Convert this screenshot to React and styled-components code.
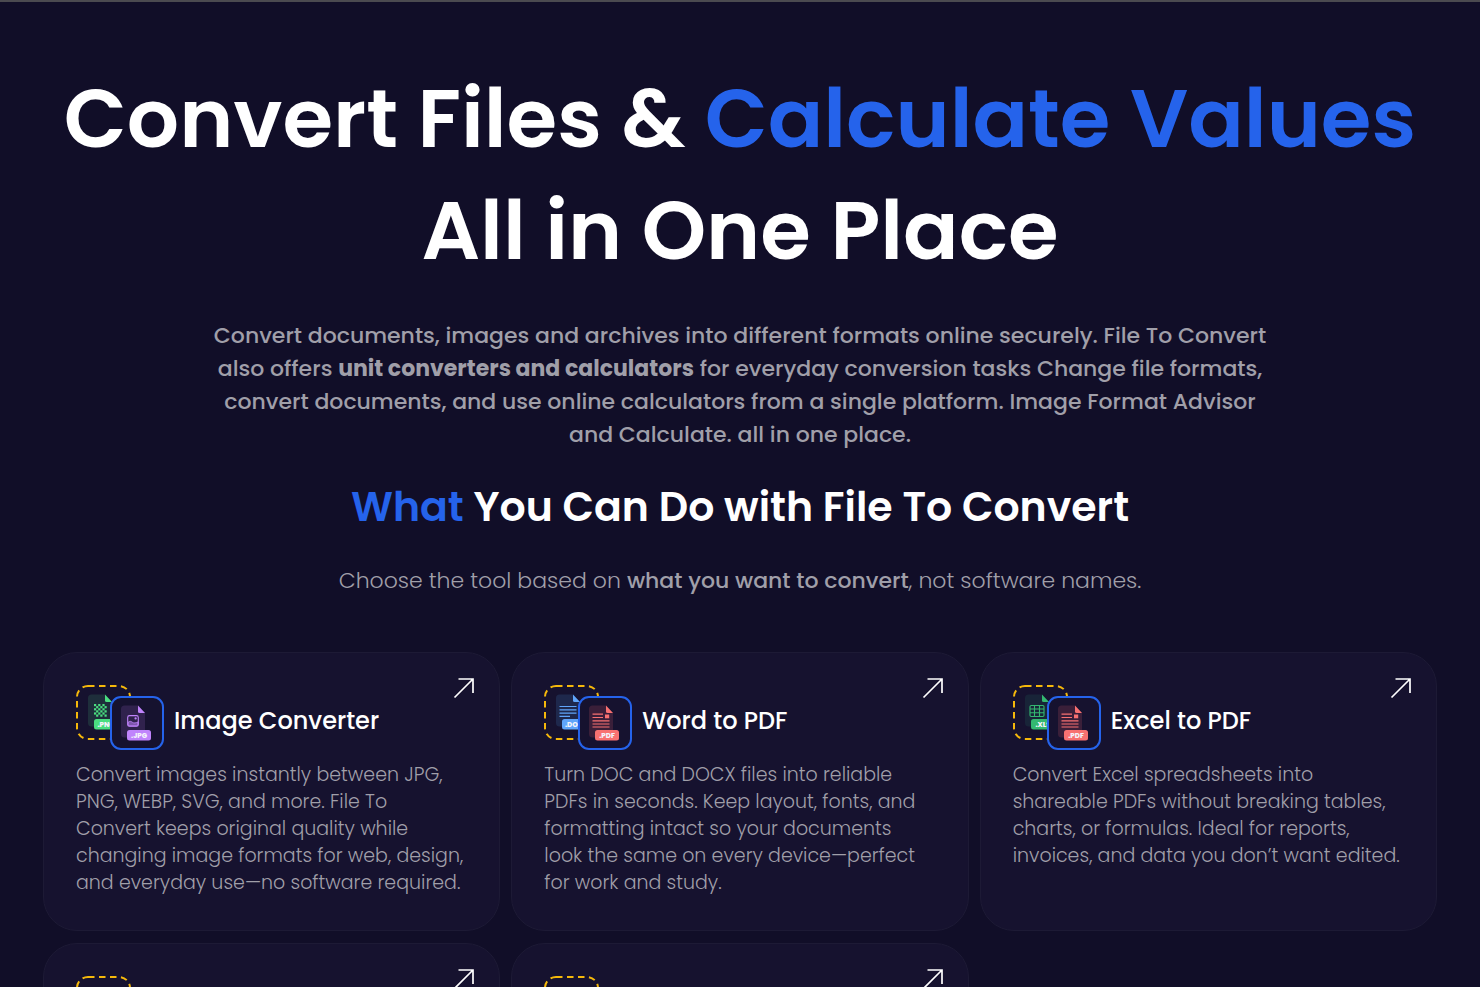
import React from "react";
import styled, { createGlobalStyle } from "styled-components";

const GlobalStyle = createGlobalStyle`
  *, *::before, *::after { box-sizing: border-box; }
  body {
    margin: 0;
    background: #110e28;
    color: #ffffff;
    font-family: Poppins, Inter, "Liberation Sans", sans-serif;
  }
`;

const Page = styled.main`
  height: 100vh;
  overflow: hidden;
  padding: 61px 43px 0;
  border-top: 2px solid #4b4a50;
  background: #110e28;
`;

const Hero = styled.header`
  text-align: center;
`;

const Accent = styled.span`
  color: #2563eb;
`;

const Title = styled.h1`
  margin: 0;
  font-size: 82px;
  line-height: 112px;
  font-weight: 600;
  white-space: nowrap;
`;

const Lead = styled.p`
  margin: 32px 0 0;
  font-size: 22px;
  line-height: 33px;
  font-weight: 500;
  color: #a09fa9;
  white-space: nowrap;

  strong { font-weight: 700; }
`;

const Subtitle = styled.h2`
  margin: 26px 0 0;
  font-size: 41px;
  line-height: 60px;
  font-weight: 600;
  white-space: nowrap;
`;

const Hint = styled.p`
  margin: 27px 0 0;
  font-size: 22px;
  line-height: 33px;
  font-weight: 300;
  color: #a09fa9;

  strong { font-weight: 500; }
`;

const Grid = styled.section`
  display: grid;
  grid-template-columns: repeat(3, minmax(0, 1fr));
  gap: 12px 11px;
  margin-top: 55px;
`;

const Card = styled.article`
  position: relative;
  min-height: 279px;
  padding: 32px;
  border: 1px solid #1d1a35;
  border-radius: 34px;
  background: #16122f;
`;

const CardLink = styled.a`
  position: absolute;
  top: 24px;
  right: 24px;
  display: flex;
  color: #ffffff;
`;

const CardHead = styled.div`
  display: flex;
  align-items: center;
  gap: 10px;
`;

const CardTitle = styled.h3`
  margin: 5px 0 0;
  font-size: 24px;
  line-height: 36px;
  font-weight: 500;
  white-space: nowrap;
`;

const CardText = styled.p`
  margin: 10px 0 0;
  font-size: 19px;
  line-height: 27px;
  font-weight: 300;
  color: #a09fa9;
  white-space: nowrap;
`;

const IconPair = styled.div`
  display: flex;
  flex: none;
`;

const IconFrom = styled.svg`
  display: block;
  margin-bottom: 11px;
`;

const IconTo = styled.svg`
  display: block;
  position: relative;
  margin: 11px 0 0 -21px;
`;

const palette = {
  PNG: { main: "#4ade80", page: "#1e2e3b" },
  JPG: { main: "#c084fc", page: "#30224d" },
  DOC: { main: "#60a5fa", page: "#1e284c" },
  PDF: { main: "#f87171", page: "#3a1f39" },
  XLS: { main: "#34b870", page: "#182438" },
};

function Glyph({ type, color }) {
  if (type === "PNG") {
    const cells = [];
    for (let r = 0; r < 6; r++)
      for (let c = 0; c < 6; c++)
        if ((r + c) % 2 === 0) cells.push(<rect key={r * 6 + c} x={17 + c * 2.1} y={19 + r * 2.1} width="2.2" height="2.2" />);
    return <g fill={color}>{cells}</g>;
  }
  if (type === "JPG")
    return (
      <g fill="none" stroke={color} strokeWidth="1.1">
        <rect x="17.7" y="19.6" width="10.6" height="10.6" rx="1.8" />
        <circle cx="25.6" cy="22.4" r="0.6" />
        <path d="M18 26.5c2-2 3.200-1 4.600-.1 1.600 1 3 .5 5.400-.4v2.700q0 1.200-1.200 1.200H19q-1 0-1-1z" fill={color} fillOpacity="0.55" strokeWidth="0.8" />
      </g>
    );
  if (type === "XLS")
    return (
      <g fill="none" stroke={color} strokeWidth="1.1">
        <rect x="16" y="20.500" width="14" height="11" rx="1.200" />
        <path d="M16 24h14M16 27.700h14M20.500 20.500v11M25.500 20.500v11" />
      </g>
    );
  if (type === "DOC")
    return <path d="M14.500 21.500h17M14.500 24.800h17M14.500 28.100h17M14.500 31.400h10.500" stroke={color} strokeWidth="1.2" />;
  return (
    <g stroke={color} strokeWidth="1.2">
      <path d="M14.500 18.200h10.500M14.500 21.500h10.500M14.500 24.800h17M14.500 28h17M14.500 31h17" />
      <rect x="27" y="18.500" width="4.200" height="3.800" fill={color} stroke="none" />
    </g>
  );
}

function FileDrawing({ type }) {
  const { main, page } = palette[type];
  return (
    <>
      <path d="M14.5 9.5H28l7 7.5v21.500q0 3-3 3H14.500q-3.500 0-3.500-3.500V13q0-3.500 3.500-3.500z" fill={page} />
      <path d="M28 9.500l7 7.500h-5.500q-1.500 0-1.500-1.500z" fill={main} />
      <Glyph type={type} color={main} />
      <rect x="17" y="34" width="24" height="10.500" rx="2.500" fill={main} />
      <text x="29" y="41.800" textAnchor="middle" fontSize="7" fontWeight="800" fill="#f4f2fb">.{type}</text>
    </>
  );
}

function FormatIcons({ from, to }) {
  return (
    <IconPair aria-hidden="true">
      <IconFrom width="55" height="55" viewBox="0 0 55 55">
        <rect x="1" y="1" width="53" height="53" rx="11" fill="#16122f" stroke="#f5b80b" strokeWidth="2" strokeDasharray="6.500 4.500" />
        {from && <g transform="translate(1 0)"><FileDrawing type={from} /></g>}
      </IconFrom>
      <IconTo width="54" height="54" viewBox="0 0 54 54">
        <rect x="1" y="1" width="52" height="52" rx="10" fill="#16122f" stroke="#2563eb" strokeWidth="2" />
        {to && <FileDrawing type={to} />}
      </IconTo>
    </IconPair>
  );
}

function Arrow() {
  return (
    <svg width="22" height="22" viewBox="0 0 22 22" fill="none" stroke="currentColor" strokeWidth="1.700" aria-hidden="true">
      <path d="M1.500 20.500L20 2M5.500 2H20v14" />
    </svg>
  );
}

const tools = [
  {
    title: "Image Converter", from: "PNG", to: "JPG",
    lines: ["Convert images instantly between JPG,", "PNG, WEBP, SVG, and more. File To", "Convert keeps original quality while", "changing image formats for web, design,", "and everyday use—no software required."],
  },
  {
    title: "Word to PDF", from: "DOC", to: "PDF",
    lines: ["Turn DOC and DOCX files into reliable", "PDFs in seconds. Keep layout, fonts, and", "formatting intact so your documents", "look the same on every device—perfect", "for work and study."],
  },
  {
    title: "Excel to PDF", from: "XLS", to: "PDF",
    lines: ["Convert Excel spreadsheets into", "shareable PDFs without breaking tables,", "charts, or formulas. Ideal for reports,", "invoices, and data you don’t want edited."],
  },
  {},
  {},
];

function Lines({ items }) {
  return items.map((line, i) => (
    <React.Fragment key={i}>
      {i > 0 && <br />}
      {line}
    </React.Fragment>
  ));
}

function ToolCard({ tool }) {
  return (
    <Card>
      <CardHead>
        <FormatIcons from={tool.from} to={tool.to} />
        {tool.title && <CardTitle>{tool.title}</CardTitle>}
      </CardHead>
      {tool.lines && <CardText><Lines items={tool.lines} /></CardText>}
      <CardLink href="#" aria-label={tool.title || "Open tool"}><Arrow /></CardLink>
    </Card>
  );
}

export default function App() {
  return (
    <>
      <GlobalStyle />
      <Page>
        <Hero>
          <Title>
            Convert Files &amp; <Accent>Calculate Values</Accent>
            <br />
            All in One Place
          </Title>
          <Lead>
            Convert documents, images and archives into different formats online securely. File To Convert
            <br />
            also offers <strong>unit converters and calculators</strong> for everyday conversion tasks Change file formats,
            <br />
            convert documents, and use online calculators from a single platform. Image Format Advisor
            <br />
            and Calculate. all in one place.
          </Lead>
          <Subtitle><Accent>What</Accent> You Can Do with File To Convert</Subtitle>
          <Hint>Choose the tool based on <strong>what you want to convert</strong>, not software names.</Hint>
        </Hero>
        <Grid>
          {tools.map((tool, i) => <ToolCard key={i} tool={tool} />)}
        </Grid>
      </Page>
    </>
  );
}
